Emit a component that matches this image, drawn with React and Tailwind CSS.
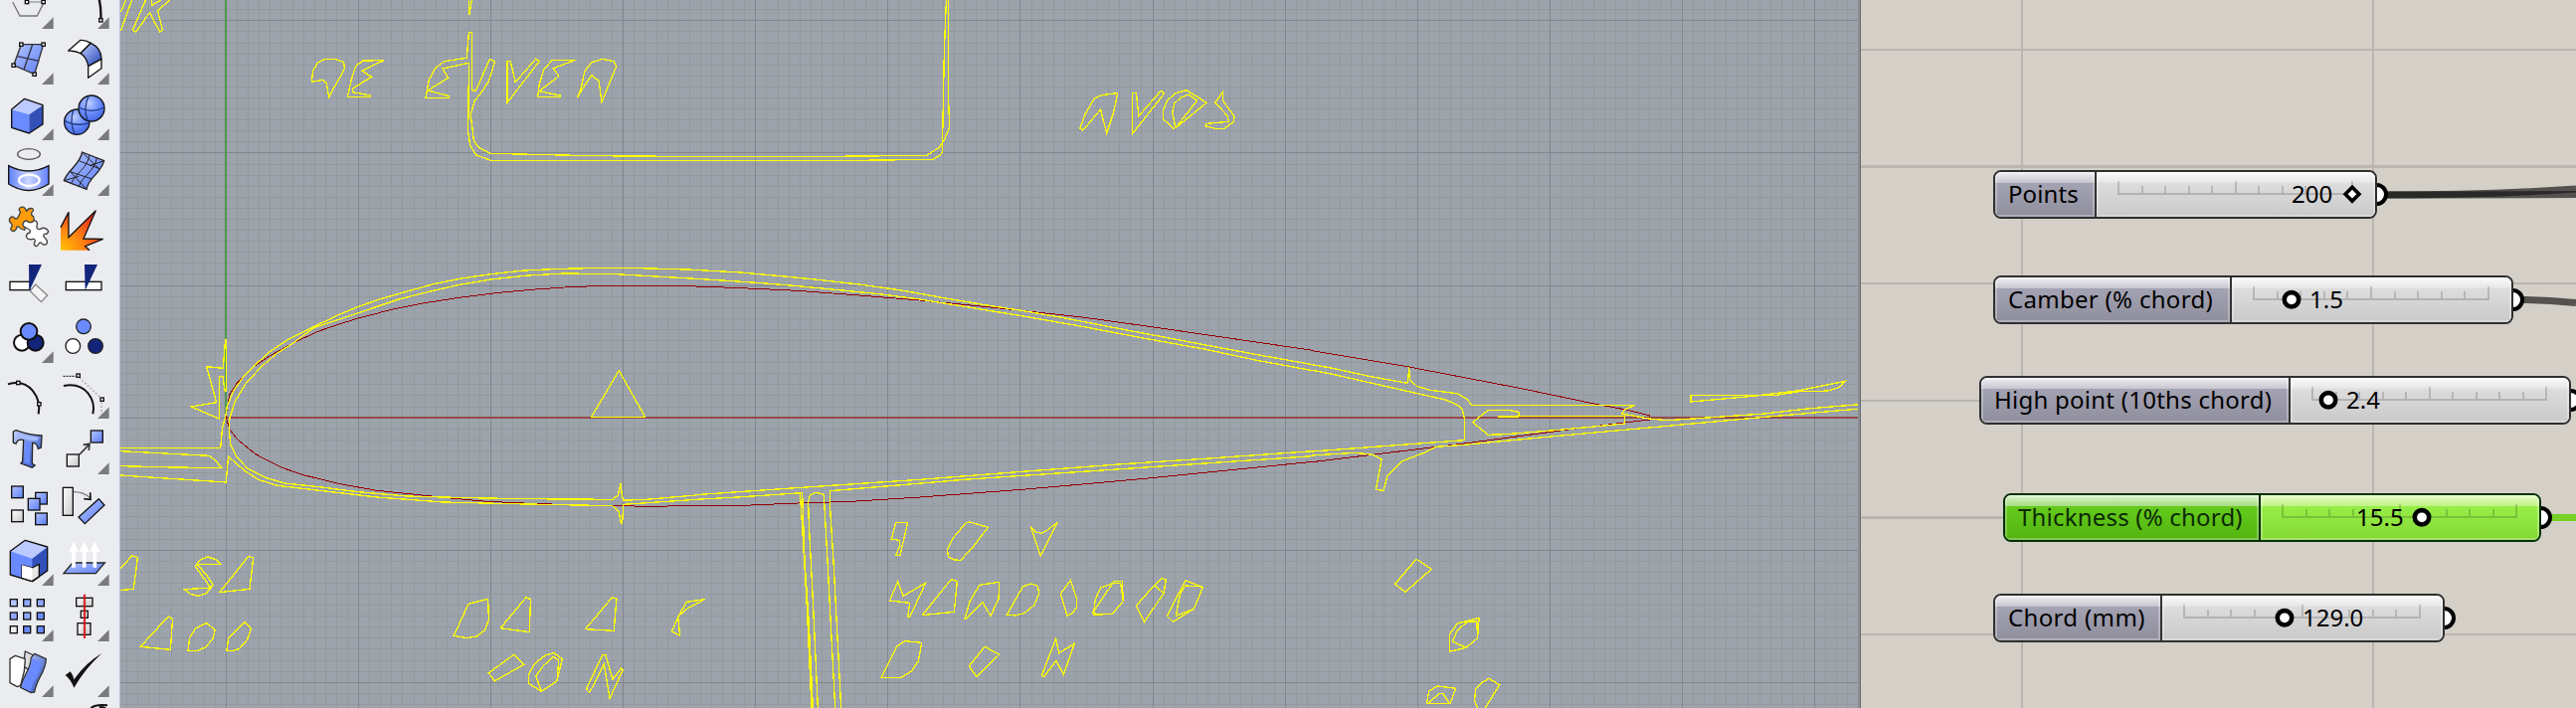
import React from "react";

/* ---------- Toolbar ---------- */

const K = "#111";
const BLUE = "#6a8bff";

function Defs() {
  return (
    <svg width="0" height="0" className="absolute">
      <defs>
        <linearGradient id="bl" x1="0" y1="0" x2="1" y2="1">
          <stop offset="0" stopColor="#b4c4ff" />
          <stop offset="1" stopColor="#5a7df5" />
        </linearGradient>
        <linearGradient id="bh" x1="0" y1="0" x2="1" y2="0">
          <stop offset="0" stopColor="#6080fa" />
          <stop offset="0.5" stopColor="#ccd7ff" />
          <stop offset="1" stopColor="#6080fa" />
        </linearGradient>
        <linearGradient id="bd" x1="0" y1="0" x2="1" y2="1">
          <stop offset="0" stopColor="#c5d2ff" />
          <stop offset="1" stopColor="#1f43b8" />
        </linearGradient>
        <radialGradient id="ball" cx="0.4" cy="0.3" r="0.75">
          <stop offset="0" stopColor="#c0ceff" />
          <stop offset="0.5" stopColor="#6e90ff" />
          <stop offset="1" stopColor="#3f62e0" />
        </radialGradient>
        <linearGradient id="gr" x1="0" y1="0" x2="1" y2="1">
          <stop offset="0" stopColor="#ffffff" />
          <stop offset="1" stopColor="#c8c8c8" />
        </linearGradient>
        <radialGradient id="fire" cx="0" cy="1" r="1.05">
          <stop offset="0" stopColor="#ffc400" />
          <stop offset="0.5" stopColor="#ff8412" />
          <stop offset="1" stopColor="#e8341c" />
        </radialGradient>
      </defs>
    </svg>
  );
}

function Handle({ x, y }) {
  return <rect x={x - 5} y={y - 5} width="10" height="10" fill="#fff" stroke={K} strokeWidth="4" />;
}

function Box({ x, y, s, h = s, fill = "url(#bl)" }) {
  return <rect x={x} y={y} width={s} height={h} fill={fill} stroke={K} strokeWidth="4" />;
}

const ORANGE_PIECE =
  "M58 648L62 640Q54 632 60 627Q68 621 75 628L80 637Q86 626 98 629Q104 634 96 640Q92 648 101 653L103 665Q92 676 84 668Q74 664 70 674Q68 682 76 686L74 694Q60 690 56 684Q48 682 50 690L42 698Q30 696 33 688Q40 680 33 673Q26 668 29 660Q36 650 42 656Q50 664 54 656Z";
const WHITE_PIECE =
  "M76 686Q66 682 70 672Q78 662 86 670Q96 674 103 665Q114 668 112 678Q108 688 116 692Q124 692 128 688Q140 686 146 698Q142 708 134 706Q128 712 136 718Q144 726 142 734Q134 742 128 736Q122 728 116 736Q114 744 106 742Q100 736 106 728Q106 718 96 722Q82 724 79 712Q82 702 90 702Q94 694 84 690Z";

const ICONS = [
  /* row 0 */
  [
    <g fill="none" stroke="#333" strokeWidth="4">
      <path d="M38 6L60 48H112L131 10" stroke="#777" />
      <path d="M81 6H131" stroke="#999" />
      <Handle x={81} y={6} />
      <Handle x={131} y={6} />
    </g>,
    <g fill="none">
      <path d="M297 -10Q306 20 304 60" stroke={K} strokeWidth="7" />
      <Handle x={304} y={61} />
    </g>,
  ],
  /* row 1 */
  [
    <g>
      <path d="M64 134L131 134L104 224L41 197Z" fill="url(#bl)" stroke="#333" strokeWidth="4" />
      <path d="M98 134L72 210M53 170L118 184" stroke="#334" strokeWidth="4" />
      <Handle x={64} y={134} />
      <Handle x={131} y={134} />
      <Handle x={41} y={197} />
      <Handle x={104} y={224} />
    </g>,
    <g stroke={K} strokeWidth="4" strokeLinejoin="round">
      <path d="M206 153L243 121Q258 120 274 130L243 161Q226 152 206 153Z" fill="#fff" />
      <path d="M274 130Q306 145 306 178L266 200Q262 172 243 161Z" fill="url(#bd)" />
      <path d="M306 178V206L266 235V200Z" fill="#fff" />
    </g>,
  ],
  /* row 2 */
  [
    <g strokeLinejoin="round">
      <path d="M35 330L88 345V402L35 385Z" fill={BLUE} />
      <path d="M88 345L129 317V375L88 402Z" fill="#3350b8" />
      <path d="M35 330L74 298L129 317L88 345Z" fill="#bccaff" />
      <path d="M35 330L74 298L129 317V375L88 402L35 385Z" fill="none" stroke={K} strokeWidth="4" />
    </g>,
    <g stroke={K} strokeWidth="4">
      <circle cx="232" cy="368" r="38" fill="url(#ball)" />
      <path d="M194 364Q232 384 270 370M222 331Q208 368 226 406" fill="none" stroke="#223a80" />
      <circle cx="276" cy="327" r="39" fill="url(#ball)" />
      <path d="M237 324Q276 344 315 324M268 289Q250 326 264 364" fill="none" stroke="#223a80" />
    </g>,
  ],
  /* row 3 */
  [
    <g fill="none">
      <ellipse cx="87" cy="465" rx="34" ry="16" stroke="#555" strokeWidth="4" />
      <path d="M26 500Q86 532 147 500V555Q86 594 26 555Z" fill="url(#bh)" stroke={K} strokeWidth="4" />
      <ellipse cx="88" cy="544" rx="31" ry="17" stroke="#fff" strokeWidth="7" />
    </g>,
    <g stroke="#222" strokeWidth="4">
      <path d="M248 459L314 485C300 530 270 530 261 571L193 545C205 510 240 500 248 459Z" fill="url(#bl)" />
      <path
        d="M270 468C262 510 230 520 215 553M292 477C284 518 250 530 238 562M240 486L303 510M212 518L277 540M250 462L300 510M270 500L312 486M196 544L238 532M212 518L258 568"
        fill="none"
        strokeWidth="3"
      />
    </g>,
  ],
  /* row 4 */
  [
    <g stroke="#444" strokeWidth="4" strokeLinejoin="round">
      <path d={ORANGE_PIECE} fill="#ff9c0a" />
      <path d={WHITE_PIECE} fill="#fff" />
    </g>,
    <g>
      <path d="M183 686L207 640V716L289 635L252 720L311 721L257 743L270 755H183Z" fill="url(#fire)" />
      <path d="M183 686L207 640V716L289 635L252 720L311 721L257 743L270 755" fill="none" stroke={K} strokeWidth="4" />
    </g>,
  ],
  /* row 5 */
  [
    <g>
      <rect x="30" y="850" width="60" height="25" fill="#fff" stroke={K} strokeWidth="4" />
      <path d="M107 858L143 891L124 911L91 878Z" fill="#f4f4f4" stroke="#888" strokeWidth="4" />
      <path d="M87 798H126L88 878Z" fill="#12257a" />
    </g>,
    <g>
      <rect x="199" y="850" width="107" height="25" fill="#fff" stroke={K} strokeWidth="4" />
      <path d="M255 798H294L257 876Z" fill="#12257a" />
    </g>,
  ],
  /* row 6 */
  [
    <g stroke={K} strokeWidth="6">
      <circle cx="66" cy="1034" r="24" fill="#fff" />
      <circle cx="107" cy="1034" r="24" fill="#12257a" />
      <circle cx="87" cy="1000" r="25" fill={BLUE} />
    </g>,
    <g stroke="#222" strokeWidth="4">
      <circle cx="252" cy="985" r="22" fill={BLUE} />
      <circle cx="220" cy="1044" r="22" fill="#fff" />
      <circle cx="288" cy="1044" r="22" fill="#12257a" />
    </g>,
  ],
  /* row 7 */
  [
    <g transform="translate(0 1050)" fill="none">
      <path d="M24 109Q70 95 98 128Q124 160 116 199" stroke={K} strokeWidth="6" />
      <Handle x={55} y={105} />
      <Handle x={118} y={169} />
    </g>,
    <g transform="translate(0 1050)" fill="none">
      <path d="M192 114Q240 105 266 137Q288 165 280 199" stroke={K} strokeWidth="6" />
      <path d="M191 85H230" stroke={K} strokeWidth="4" strokeDasharray="5 4" />
      <path d="M240 90L304 150M306 164V200" stroke="#aaa" strokeWidth="5" strokeDasharray="5 6" />
      <Handle x={236} y={83} />
      <Handle x={308} y={155} />
    </g>,
  ],
  /* row 8 */
  [
    <g transform="translate(0 1050)">
      <path
        d="M40 252L48 248Q85 262 126 264L124 300L115 304Q112 286 98 286L97 345Q98 352 105 354L97 361L63 348L68 342L71 278Q54 272 48 289L40 285Z"
        fill="url(#bd)"
        stroke="#222"
        strokeWidth="4"
      />
      <path d="M50 256Q85 268 118 270L112 280Q85 280 52 266Z" fill="#a6baff" />
      <path d="M76 280L90 284L89 350L74 346Z" fill={BLUE} />
    </g>,
    <g transform="translate(0 1050)">
      <Box x={274} y={249} s={36} />
      <Box x={202} y={321} s={36} fill="url(#gr)" />
      <path d="M240 321L270 290M251 292L270 289L268 309" fill="none" stroke="#333" strokeWidth="5" />
    </g>,
  ],
  /* row 9 */
  [
    <g transform="translate(0 1050)">
      <Box x={35} y={417} s={35} />
      <Box x={107} y={436} s={35} />
      <Box x={85} y={454} s={35} />
      <Box x={35} y={489} s={35} fill="url(#gr)" />
      <Box x={107} y={498} s={35} />
    </g>,
    <g transform="translate(0 1050)">
      <Box x={190} y={421} s={30} h={84} fill="url(#gr)" />
      <path d="M298 455L315 474L256 530L237 510Z" fill="url(#bl)" stroke={K} strokeWidth="4" />
      <path d="M222 434Q252 434 272 452" fill="none" stroke="#777" strokeWidth="4" />
      <path d="M272 436L273 457L253 455" fill="none" stroke={K} strokeWidth="5" />
    </g>,
  ],
  /* row 10 */
  [
    <g transform="translate(0 1050)" strokeLinejoin="round">
      <path d="M31 613L76 580L143 600V672L97 704L31 684Z" fill={BLUE} />
      <path d="M97 635L143 600V672L97 704Z" fill="#3350b8" />
      <path d="M31 613L76 580L143 600L97 635Z" fill="#bccaff" />
      <path d="M66 655L97 663L118 652V690L97 704L66 694Z" fill="#e6e6e6" stroke={K} strokeWidth="4" />
      <path d="M66 655L97 663V704L66 694Z" fill="#fff" />
      <path d="M31 613L76 580L143 600V672L97 704L31 684Z" fill="none" stroke={K} strokeWidth="4" />
    </g>,
    <g transform="translate(0 1050)">
      <path d="M219 648H316L289 680H192Z" fill="url(#bl)" stroke="#222" strokeWidth="4" />
      <path d="M222 662V606M254 662V606M286 662V606" stroke="#fff" strokeWidth="11" />
      <path d="M207 614L222 584L237 614ZM239 614L254 584L269 614ZM271 614L286 584L301 614Z" fill="#fff" />
    </g>,
  ],
  /* row 11 */
  [
    <g transform="translate(0 1050)">
      {[758, 798, 839].map((y, r) =>
        [31, 71, 112].map((x, c) => (
          <Box
            key={x + "-" + y}
            x={x}
            y={y}
            s={21}
            fill={r === 2 && c === 0 ? "#eee" : ["#b4c4ff", "#90a8ff", "#6a8bff"][Math.min(2, Math.floor((r + c + 1) / 2))]}
          />
        ))
      )}
    </g>,
    <g transform="translate(0 1050)">
      <Box x={230} y={754} s={49} h={25} fill="url(#gr)" />
      <Box x={244} y={793} s={21} fill="#e8e8e8" />
      <Box x={234} y={830} s={39} h={35} fill="url(#gr)" />
      <path d="M255 743V876" stroke="#d80c14" strokeWidth="7" opacity="0.85" />
    </g>,
  ],
  /* row 12 */
  [
    <g transform="translate(0 1050)" stroke="#333" strokeWidth="4" strokeLinejoin="round">
      <path d="M76 915L108 930L96 976L70 960Z" fill="#ddd" />
      <path d="M30 938L46 928L76 938L73 975L62 1018L52 1022L30 1010Z" fill="#fff" />
      <path d="M94 934L104 922L139 938C136 985 112 990 104 1038L94 1040L62 1024C70 985 92 975 94 934Z" fill="url(#bd)" />
      <path d="M96 936L124 948C122 985 100 995 92 1036L66 1024C74 985 94 975 96 936Z" fill={BLUE} stroke="none" />
    </g>,
    <g transform="translate(0 1050)">
      <path d="M197 987L212 976Q220 985 223 1000Q258 950 307 921Q256 968 223 1025Q214 1000 197 987Z" fill={K} />
    </g>,
  ],
  /* row 13 */
  [
    null,
    <g transform="translate(0 1050)">
      <path d="M274 1086Q290 1074 324 1078M300 1084Q310 1080 322 1090" fill="none" stroke={K} strokeWidth="6" />
    </g>,
  ],
];

const NO_FLYOUT = new Set(["4-0", "4-1", "5-0", "5-1", "6-1", "7-0", "8-0", "9-0", "9-1", "13-0", "13-1"]);

function Toolbar() {
  return (
    <aside className="h-full w-[121px] shrink-0 overflow-hidden border-r border-[#b5c0d9] bg-[#ebecf0]">
      <div className="-mt-[26px] grid w-28 grid-cols-[56px_56px]">
        {ICONS.flatMap((row, r) =>
          row.map((icon, c) => {
            const x = 168 * c;
            const y = 168 * r - 78;
            return (
              <button key={r + "-" + c} className="block h-14 w-14">
                <svg width="56" height="56" viewBox={`${x} ${y} 168 168`} className="overflow-visible">
                  {!NO_FLYOUT.has(r + "-" + c) && (
                    <path d={`M${x + 161} ${y + 130}V${y + 165}H${x + 126}Z`} fill="#7a7b7e" />
                  )}
                  {icon}
                </svg>
              </button>
            );
          })
        )}
      </div>
    </aside>
  );
}

/* ---------- CAD viewport ---------- */

const STEP = 133.08;

function gridPath(step, skipMajor) {
  let d = "";
  for (let i = -12; i < 160; i++) {
    if (skipMajor && i % 12 === 0) continue;
    const x = Math.round(227 + i * step);
    if (x > 121 && x < 1869) d += `M${x + 0.5} 0V712`;
  }
  for (let i = -40; i < 40; i++) {
    if (skipMajor && i % 12 === 0) continue;
    const y = Math.round(419.6 + i * step);
    if (y >= 0 && y < 712) d += `M121 ${y + 0.5}H1869`;
  }
  return d;
}

/* Curve data: each sheet has its own origin and scale. */
const SHEETS = [
  {
    t: "translate(120 0) scale(0.35714 0.33333)",
    d: [
      "M4 93L35 0M4 36L19 0",
      "M74 0L37 92L47 96L85 38L114 96L122 92L108 32L142 0M91 0V16L118 0",
      "M541 250L545 215L557 190L578 179H610L632 187L634 207L612 250L590 293L583 250L573 241L541 247Z",
      "M642 293L652 245L665 200L685 183L744 182L684 214L710 232L657 267V278L707 288V292Z",
      "M985 0V46L992 0",
      "M984 190L910 207L926 235L868 273L929 290V296H862L872 240L890 205L915 185L978 175L984 97H993V272L1003 275L1043 178L1057 186L1040 245L1022 275L1000 305L989 345L998 425L1012 445L1046 463L1326 470L1568 472",
      "M984 190L982 400L988 440L1005 468L1046 484H1568",
      "M1092 184H1101L1115 248L1172 178L1182 185L1092 310Z",
      "M1178 292L1182 255L1195 210L1218 182L1284 181L1222 206L1237 230L1182 275L1240 288V292Z",
      "M1290 293L1300 265L1310 215L1330 188L1360 178L1392 185L1399 200L1358 308L1350 245L1329 227L1300 275Z",
    ],
  },
  {
    t: "translate(640 0) scale(0.40816 0.33333)",
    d: [
      "M90 472H478L715 469L745 445L757 425L771 385L768 290V0",
      "M90 484H545L730 481L748 468L754 458V400L758 150L763 0",
      "M1092 388L1105 345L1128 296L1150 286L1185 281L1175 340L1158 402L1143 330L1100 393Z",
      "M1222 281H1231L1237 350L1292 274L1300 282L1222 403Z",
      "M1325 390L1298 360V330L1308 302L1328 281L1355 272L1404 310L1328 386L1320 340L1325 312L1340 295L1360 285L1381 303L1328 386",
      "M1444 278L1425 310L1455 348L1459 367L1405 373L1400 380L1425 388H1448L1470 368L1473 352L1444 303Z",
    ],
  },
  {
    t: "translate(120 240) scale(0.36990 0.33333)",
    d: [
      "M3 631H275L280 570L288 540L293 505L310 460L335 420L370 380L410 340L460 303L520 270L545 257L600 228L650 205L710 182L780 160L850 138L930 120L1010 107L1100 96L1200 91L1320 88H1370L1480 91L1568 94",
      "M300 540L303 530L315 490L345 435L390 382L430 345L470 317L500 292L530 268L580 250L640 228L700 205L760 183L830 163L920 140L1010 123L1110 111L1210 105L1350 107L1440 113L1568 121",
      "M300 540L298 575L302 620L320 660L350 695L400 722L450 738L550 750L640 763L780 777L950 782L1100 785L1340 787L1355 775L1363 738L1366 775L1370 789L1420 788L1568 774",
      "M3 714L290 735L296 657L340 700L380 728L430 745L560 762L700 780L880 795L1110 801L1250 804L1340 806L1358 825L1364 860L1367 858L1370 802L1568 787",
      "M3 641L245 655L262 670L278 692L150 690L3 686",
      "M237 386L282 391L288 305H290V460H287L281 416H272L271 543L195 507L264 494Z",
      "M1283 538L1358 398L1429 538Z",
    ],
  },
  {
    t: "translate(680 250) scale(0.40816 0.33333)",
    d: [
      "M48 64L70 66L160 72L250 82L350 94L450 108L550 125L650 147L760 170L850 187L950 208L1050 232L1170 260L1300 290L1430 320L1568 350",
      "M48 91L100 95L200 103L300 113L400 125L500 137L600 153L700 173L850 203L1000 235L1150 270L1300 303L1430 337L1568 368",
      "M48 743L200 730L380 715L600 697L850 673L1100 650L1300 634L1568 611",
      "M48 757L150 750L310 737",
    ],
  },
  {
    t: "translate(740 470) scale(0.33333)",
    d: [
      "M193 77H200L207 280L220 470L232 726M193 77L200 180L213 400L228 726",
      "M247 726L232 400L220 170L218 105L223 85L240 76L265 82L277 300L299 726",
      "M317 726L295 300L284 125V71L500 53L700 36L1060 12L1235 0L1740 -34",
      "M482 166H518L495 265H482L495 235L492 220L469 216Z",
      "M694 167L706 165L760 181L715 240L678 280L658 279L640 270L638 248L655 213Z",
      "M889 179L905 195L920 199L935 192L970 166L919 268Z",
      "M488 344L504 388L572 349L524 452H518L524 409L464 402Z",
      "M562 446L649 338L667 344L658 436Z",
      "M690 457L705 405L735 355L794 346L792 398L768 448L743 406L697 455Z",
      "M817 445L865 360L890 351L910 358L914 380L900 415L870 440L842 447Z",
      "M1009 341L1027 394V422L1015 440L999 448L979 381Z",
      "M1075 440L1140 344H1165L1168 404L1135 442L1078 445L1084 398L1100 363L1140 349H1160L1168 404M1075 440L1108 445",
      "M1207 418L1262 355L1284 335L1297 338L1290 380L1232 466ZM1262 355L1290 380",
      "M1300 448L1356 341L1408 362L1381 427L1318 466ZM1408 360L1355 357L1340 380L1327 448L1381 427",
      "M439 634L485 540L510 524L560 529L550 585L530 615L498 634Z",
      "M703 600L750 541L794 565L726 632Z",
      "M922 628L965 517L974 560L1021 532L988 625L966 583L929 632Z",
    ],
  },
  {
    t: "translate(1300 340) scale(0.38265 0.33333)",
    d: [
      "M50 80L100 90L200 115L300 136L302 130L305 88L307 125L325 145L360 157L430 167L455 182L470 202H898L870 217L865 228L935 243L985 248L1090 240L1240 228L1350 213L1490 200",
      "M50 97L100 108L200 134L300 160L400 186L430 200L445 215L450 240V308L50 342",
      "M872 232V258L700 277L560 290L513 292L472 254L513 217H568L595 224L592 237H541V235H872",
      "M1490 213L1240 238L985 265L650 300L450 322L375 328L340 348L285 372L248 416L238 460L218 457L233 365L210 352L165 346L50 354",
      "M1045 172H1270L1330 161H1380L1410 158L1435 148L1452 130L1330 158L1210 175L1045 192Z",
      "M268 742L324 667L364 697L295 766Z",
      "M411 946V895L432 861L489 844L485 905L455 934ZM455 934L419 915L433 880L460 855H483L485 905",
      "M352 1102L357 1065L380 1050L428 1057L413 1102ZM355 1102L385 1072L395 1073L410 1100",
      "M486 1116L477 1095L480 1060L495 1040L515 1027L543 1046L505 1116",
    ],
  },
  {
    t: "translate(120 480) scale(0.40816 0.33333)",
    d: [
      "M0 278L32 236L45 243L35 337L0 341",
      "M250 262L238 248L218 240L200 248L187 268L225 333L160 338L175 352L195 358L215 350L230 325L220 303L192 262Z",
      "M247 347L318 238L330 243L321 337Z",
      "M52 511L121 419L131 428L126 520Z",
      "M169 523L173 485L188 455L215 440L236 460L230 488L212 513L192 523Z",
      "M264 523L269 485L308 437L325 456L315 490L295 518L280 523Z",
      "M824 478L860 382L908 367L910 430L900 462L880 480L856 485Z",
      "M939 455L1002 362L1013 368L1010 467Z",
      "M1148 458L1214 362L1225 367L1218 463Z",
      "M1442 368L1397 376L1375 425L1361 465L1381 478L1376 420L1400 395Z",
      "M910 590L972 535L996 565L924 615Z",
      "M1040 646L1008 622V595L1025 560L1050 537L1070 530L1091 548L1078 615L1040 646L1026 600L1045 568L1070 541L1082 552L1078 615",
      "M1150 640L1190 536H1198L1215 610L1236 577L1240 582L1208 667L1194 563L1158 650Z",
    ],
  },
];

const FOIL = [
  {
    t: "translate(120 240) scale(0.36990 0.33333)",
    d: "M1568 142H1310L1210 147L1130 153L1030 163L930 177L830 194L740 214L650 240L600 257L540 280L470 316L410 353L360 390L320 435L300 470L293 510L290 540L300 575L320 605L370 650L440 690L500 713L600 740L700 760L840 776L900 783L1000 793L1100 798L1250 804L1450 808L1568 805",
  },
  {
    t: "translate(680 250) scale(0.40816 0.33333)",
    d: "M48 114L140 118L300 127L450 141L600 156L750 174L850 187L1000 207L1170 236L1350 268L1568 307M48 775H164L300 768L430 763L600 750L850 727L1000 711L1170 692L1350 670L1568 643",
  },
  {
    t: "translate(1300 340) scale(0.38265 0.33333)",
    d: "M50 38L300 86L600 152L800 200L875 216L937 234V246L750 272L450 318L200 353L50 374",
  },
];

function Viewport() {
  return (
    <main className="h-full w-[1750px] shrink-0 border-r border-[#666a6e] bg-[#9da3aa]">
      <svg width="1749" height="712" viewBox="121 0 1749 712" shapeRendering="crispEdges" fill="none" className="block">
        <path d={gridPath(STEP / 12, true)} stroke="#93999f" />
        <path d={gridPath(STEP, false)} stroke="#82868f" />
        <path d="M227 420H1869" stroke="#954a4b" strokeWidth="2" />
        <path d="M227 0V420" stroke="#4c984e" strokeWidth="2" />
        <g stroke="#960005">
          {FOIL.map((f) => (
            <path key={f.t} d={f.d} transform={f.t} vectorEffect="non-scaling-stroke" />
          ))}
        </g>
        <g stroke="#ffff00" strokeWidth="1.35">
          {SHEETS.map((s) => (
            <g key={s.t} transform={s.t}>
              {s.d.map((d) => (
                <path key={d} d={d} vectorEffect="non-scaling-stroke" />
              ))}
            </g>
          ))}
        </g>
        <path d="M1869 0V712" stroke="#8b9096" strokeWidth="2" />
      </svg>
    </main>
  );
}

/* ---------- Node canvas ---------- */

const SLIDERS = [
  { name: "Points", value: "200", at: "left-[133px] top-[171px]", size: "w-[386px]", label: "w-[102px]", ls: "tracking-[0.1px]", knob: 258, text: 198, w: 284, shape: "diamond" },
  { name: "Camber (% chord)", value: "1.5", at: "left-[133px] top-[277px]", size: "w-[523px]", label: "w-[238px]", ls: "tracking-[0.3px]", knob: 61, text: 80, w: 285 },
  { name: "High point (10ths chord)", value: "2.4", at: "left-[119px] top-[378px]", size: "w-[595px]", label: "w-[311px]", ls: "tracking-[0.25px]", knob: 39, text: 58, w: 284 },
  { name: "Thickness (% chord)", value: "15.5", at: "left-[143px] top-[496px]", size: "w-[541px]", label: "w-[257px]", ls: "tracking-[0.2px]", knob: 163, text: 98, w: 284, active: true },
  { name: "Chord (mm)", value: "129.0", at: "left-[133px] top-[597px]", size: "w-[454px]", label: "w-[168px]", ls: "tracking-[0.35px]", knob: 124, text: 143, w: 286 },
];

function Track({ w, knob, shape }) {
  const a = 23;
  const step = (w - 49) / 10;
  let d = `M${a - 1} 24H${a + step * 10 + 1}`;
  for (let i = 0; i <= 10; i++) d += `M${Math.round(a + step * i)} 23V${i % 5 ? 16 : 11}`;
  return (
    <svg width={w} height="49" viewBox={`0 0 ${w} 49`} className="absolute left-0 top-0 overflow-visible" fill="none">
      <path d={d} stroke="#000" strokeOpacity="0.16" strokeWidth="2" />
      {shape === "diamond" ? (
        <path d={`M${knob} 17.3L${knob + 6.9} 24.2L${knob} 31.1L${knob - 6.9} 24.2Z`} fill="#fff" stroke="#000" strokeWidth="3.6" />
      ) : (
        <circle cx={knob} cy="24.3" r="7.2" fill="#fff" stroke="#000" strokeWidth="4.6" />
      )}
    </svg>
  );
}

function Slider({ s }) {
  const edge = s.active ? "border-[#023002]" : "border-[#2f2f2f]";
  const left = s.active
    ? "bg-[linear-gradient(#ddf5cf_0px,#a4dc80_11px,#66ca1e_11px,#52b40e_100%)] border-[#023002]"
    : "bg-[linear-gradient(#f0f0f3_0px,#c6c5ce_11px,#a4a3b3_11px,#8f8e9d_100%)] border-[#333333]";
  const right = s.active
    ? "bg-[linear-gradient(#e6fcc9_0px,#bff483_11px,#98ee48_11px,#84d834_100%)]"
    : "bg-[linear-gradient(#fbfbfb_0px,#e5e5e5_11px,#dddddd_11px,#c9c9c9_100%)]";
  const glow = "shadow-[inset_0_0_0_2px_rgba(255,255,255,0.28)]";
  return (
    <div className={`absolute h-[49px] ${s.at} ${s.size}`}>
      <div className="absolute -right-[11px] top-[13px] h-[23px] w-[23px] rounded-full border-[4px] border-black bg-white" />
      <div className={`relative flex h-full overflow-hidden rounded-[8px] border-2 text-black ${edge}`}>
        <div className={`flex shrink-0 items-center whitespace-nowrap border-r-2 pb-px pl-[13px] ${s.label} ${left} ${glow}`}>
          <span className={`${s.ls} ${s.active ? "text-[#0b2a05]" : ""}`}>{s.name}</span>
        </div>
        <div className={`relative flex-1 ${right} ${glow}`}>
          <div className="absolute -left-px -top-[2px]">
            <Track w={s.w} knob={s.knob} shape={s.shape} />
          </div>
          <span className="absolute top-0 flex h-full items-center pb-px" style={{ left: s.text - 2 }}>
            {s.value}
          </span>
        </div>
      </div>
    </div>
  );
}

function NodeCanvas() {
  return (
    <section className="relative h-full flex-1 overflow-hidden bg-[#d4d0c8] font-['Noto_Sans','Open_Sans',sans-serif] text-[24px] leading-none">
      <svg width="719" height="712" viewBox="1871 0 719 712" className="absolute left-0 top-0" fill="none">
        <g stroke="#bab6af" strokeWidth="2" shapeRendering="crispEdges">
          <path d="M2033 0V712M2386 0V712M1871 50H2590M1871 285H2590M1871 403H2590M1871 638H2590" />
          <path d="M1871 167.5H2590M1871 520.5H2590" strokeWidth="3" />
        </g>
        <g strokeWidth="7">
          <path d="M2396 196C2460 196 2520 195 2590 190" stroke="#161614" strokeOpacity="0.68" />
          <path d="M2396 196C2460 196 2520 196 2590 195.5" stroke="#161614" strokeOpacity="0.68" />
          <path d="M2532 301.5C2555 301.5 2575 303 2590 304.5" stroke="#161614" strokeOpacity="0.68" />
          <path d="M2558 520.5H2590" stroke="#78d126" />
        </g>
      </svg>
      {SLIDERS.map((s) => (
        <Slider key={s.name} s={s} />
      ))}
    </section>
  );
}

export default function App() {
  return (
    <div className="flex h-[712px] w-[2590px] overflow-hidden">
      <Defs />
      <Toolbar />
      <Viewport />
      <NodeCanvas />
    </div>
  );
}
